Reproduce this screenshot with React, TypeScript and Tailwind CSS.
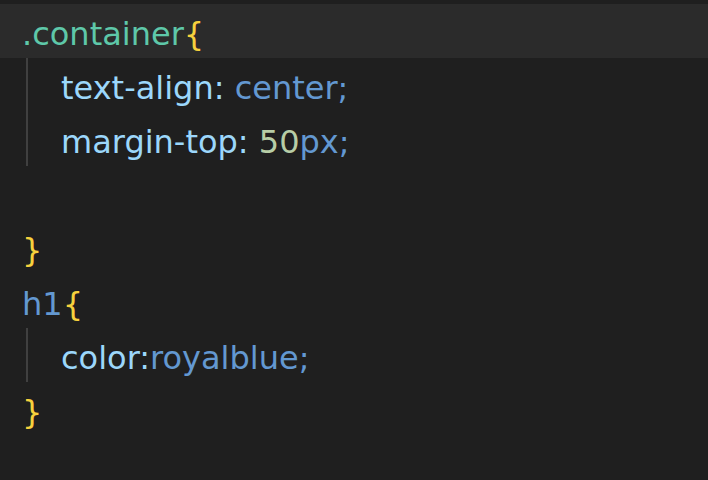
import React from 'react';

type Tok = { t: string; c: string };

const sel = 'text-[#5ec8a9]';
const brace = 'text-[#f7d13d]';
const prop = 'text-[#9cd7fb]';
const val = 'text-[#6398d1]';
const num = 'text-[#b7cda6]';

const lines: { indent: boolean; active?: boolean; toks: Tok[] }[] = [
  { indent: false, active: true, toks: [{ t: '.container', c: sel }, { t: '{', c: brace }] },
  { indent: true, toks: [{ t: 'text-align', c: prop }, { t: ': ', c: prop }, { t: 'center;', c: val }] },
  { indent: true, toks: [{ t: 'margin-top', c: prop }, { t: ': ', c: prop }, { t: '50', c: num }, { t: 'px;', c: val }] },
  { indent: false, toks: [] },
  { indent: false, toks: [{ t: '}', c: brace }] },
  { indent: false, toks: [{ t: 'h1', c: val }, { t: '{', c: brace }] },
  { indent: true, toks: [{ t: 'color', c: prop }, { t: ':', c: prop }, { t: 'royalblue;', c: val }] },
  { indent: false, toks: [{ t: '}', c: brace }] },
];

export default function App() {
  return (
    <div className="w-[708px] h-[480px] bg-[#1f1f1f] pt-[4px] overflow-hidden" style={{ fontFamily: '"DejaVu Sans", sans-serif' }}>
      {lines.map((line, i) => (
        <div
          key={i}
          className={`h-[54px] flex items-center text-[32px] pl-[22px] whitespace-pre ${line.active ? 'bg-[#2b2b2b]' : ''}`}
        >
          {line.indent && (
            <div className="w-[39px] h-full flex shrink-0">
              <div className="ml-[4px] w-[2px] h-full bg-[#404040]" />
            </div>
          )}
          <span className="mt-[6px]">
            {line.toks.map((tok, j) => (
              <span key={j} className={tok.c}>{tok.t}</span>
            ))}
          </span>
        </div>
      ))}
    </div>
  );
}
